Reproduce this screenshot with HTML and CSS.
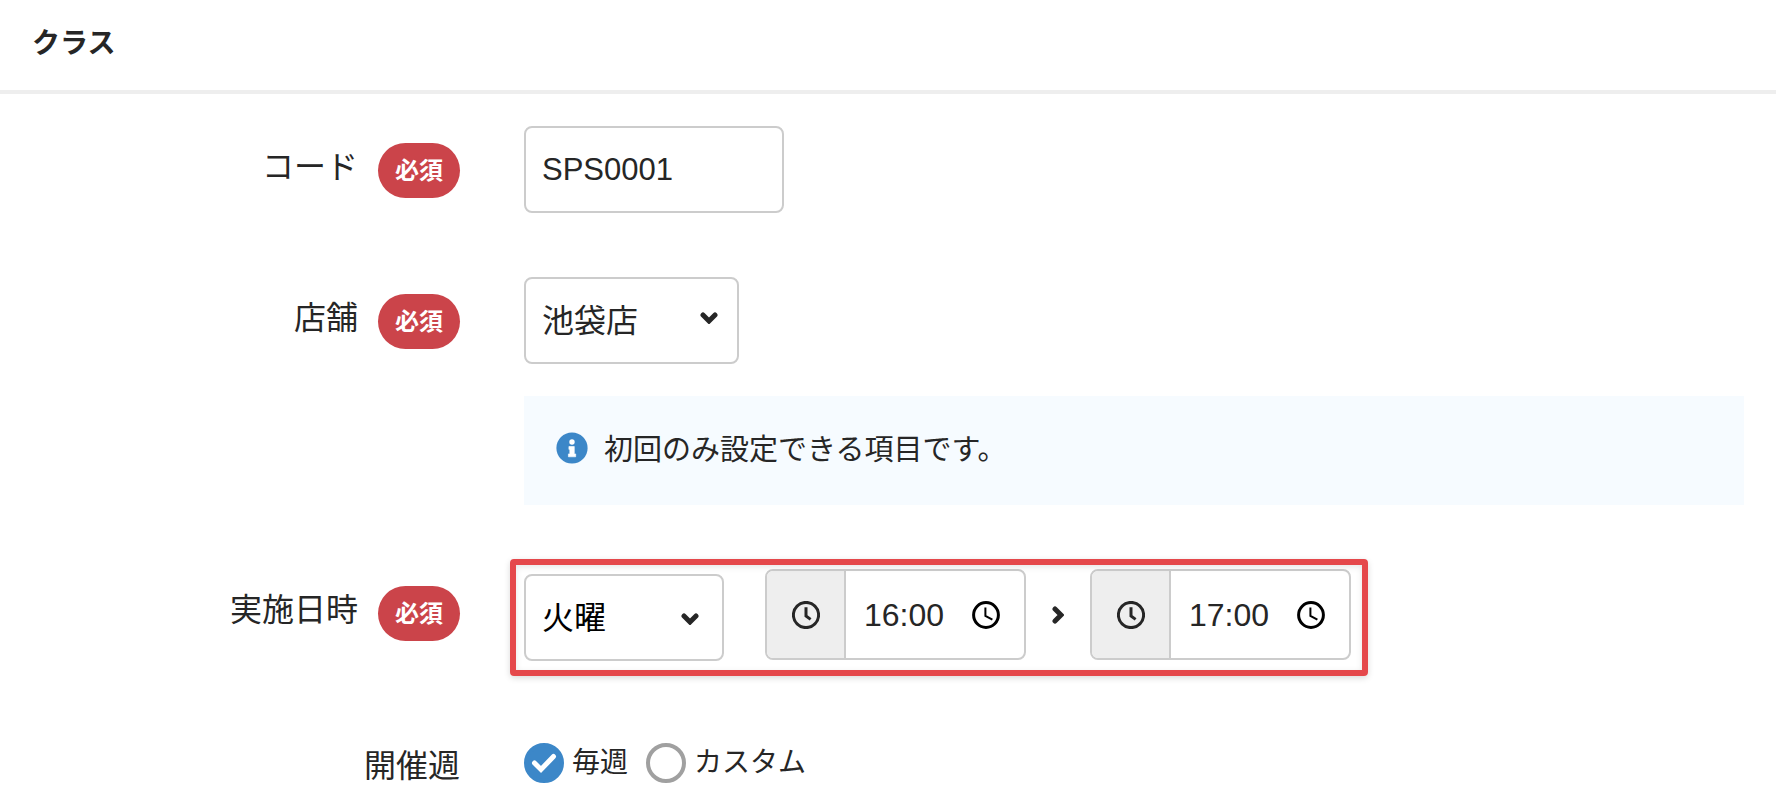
FILE: index.html
```html
<!DOCTYPE html>
<html lang="ja">
<head>
<meta charset="utf-8">
<meta name="viewport" content="width=device-width, initial-scale=1">
<title>クラス</title>
<link rel="stylesheet" href="styles.css">
</head>
<body>
<header class="page-header">
  <h1 class="page-title">クラス</h1>
</header>
<form class="form">
  <div class="row">
    <div class="row-label">
      <label class="label-text" for="code">コード</label>
      <span class="badge">必須</span>
    </div>
    <div class="row-content">
      <input class="control code" id="code" type="text" value="SPS0001">
    </div>
  </div>

  <div class="row">
    <div class="row-label">
      <label class="label-text" for="shop">店舗</label>
      <span class="badge">必須</span>
    </div>
    <div class="row-content">
      <div class="select shop">
        <select class="control" id="shop"><option>池袋店</option></select>
        <svg class="caret" viewBox="0 0 18 12" aria-hidden="true"><path d="M3 3l6 6 6-6"/></svg>
      </div>
      <div class="notice">
        <svg class="notice-icon" viewBox="0 0 32 32" aria-hidden="true"><circle cx="16" cy="16" r="15.6" fill="#3c87c8"/><circle cx="16" cy="10" r="2.7" fill="#fff"/><path fill="#fff" d="M12.9 14.5h5.4v7.4h1.4v2.9h-7.3v-2.9h1.4v-4.5h-.9z" stroke="#fff" stroke-width=".6" stroke-linejoin="round"/></svg>
        <p class="notice-text">初回のみ設定できる項目です。</p>
      </div>
    </div>
  </div>

  <div class="row">
    <div class="row-label">
      <label class="label-text" for="day">実施日時</label>
      <span class="badge">必須</span>
    </div>
    <div class="row-content">
      <div class="schedule">
        <div class="select day">
          <select class="control" id="day"><option>火曜</option></select>
          <svg class="caret" viewBox="0 0 18 12" aria-hidden="true"><path d="M3 3l6 6 6-6"/></svg>
        </div>
        <div class="times">
          <div class="time">
            <span class="addon"><svg class="clock" viewBox="0 0 28 28" aria-hidden="true"><circle cx="14" cy="14" r="12.6"/><path d="M14 6.2V15l4.6 3.4"/></svg></span>
            <input class="time-input" type="text" value="16:00" aria-label="開始時刻">
            <button class="picker" type="button" aria-label="開始時刻を選択"><svg class="clock clock-picker" viewBox="0 0 28 28" aria-hidden="true"><circle cx="14" cy="14" r="12.4"/><path class="hands" d="M13.4 6.5v8.3l7 3.8"/></svg></button>
          </div>
          <svg class="arrow" viewBox="0 0 12 18" aria-hidden="true"><path d="M3 3l6 6-6 6"/></svg>
          <div class="time">
            <span class="addon"><svg class="clock" viewBox="0 0 28 28" aria-hidden="true"><circle cx="14" cy="14" r="12.6"/><path d="M14 6.2V15l4.6 3.4"/></svg></span>
            <input class="time-input" type="text" value="17:00" aria-label="終了時刻">
            <button class="picker" type="button" aria-label="終了時刻を選択"><svg class="clock clock-picker" viewBox="0 0 28 28" aria-hidden="true"><circle cx="14" cy="14" r="12.4"/><path class="hands" d="M13.4 6.5v8.3l7 3.8"/></svg></button>
          </div>
        </div>
        <div class="highlight"></div>
      </div>
    </div>
  </div>

  <div class="row" role="radiogroup" aria-labelledby="weeks">
    <div class="row-label">
      <span class="label-text" id="weeks">開催週</span>
    </div>
    <div class="row-content radios">
      <label class="radio">
        <span class="radio-mark"><input type="radio" name="week" checked><svg class="check" viewBox="0 0 40 40" aria-hidden="true"><path d="M10.5 20l6.5 6.5L29.5 13.5"/></svg></span>毎週
      </label>
      <label class="radio">
        <span class="radio-mark"><input type="radio" name="week"></span>カスタム
      </label>
    </div>
  </div>
</form>
</body>
</html>
```
FILE: styles.css
```css
* {
  box-sizing: border-box;
}

body {
  margin: 0;
  background: #fff;
  color: #262626;
  font: 32px/48px "Liberation Sans", "Noto Sans CJK JP", sans-serif;
}

.page-header {
  padding: 24px 32px 26px;
  border-bottom: 4px solid #eee;
}

.page-title {
  margin: 0;
  font-size: 28px;
  line-height: 40px;
  font-weight: 700;
}

.form {
  display: flex;
  flex-direction: column;
  gap: 64px;
  padding: 32px 32px 0;
}

.row {
  display: grid;
  grid-template-columns: 25% minmax(0, 1fr);
  column-gap: 64px;
}

.row-label {
  display: flex;
  justify-content: flex-end;
  align-items: flex-start;
  gap: 20px;
  padding-top: 17px;
}

.badge {
  padding: 8px 17px;
  border-radius: 28px;
  background: #cb444a;
  color: #fff;
  font-size: 24px;
  line-height: 39px;
  font-weight: 700;
}

.row-content {
  display: flex;
  flex-direction: column;
  align-items: flex-start;
  gap: 32px;
}

.control {
  width: 100%;
  height: 87px;
  margin: 0;
  padding: 0 16px;
  border: 2px solid #ccc;
  border-radius: 8px;
  background: #fff;
  color: inherit;
  font: inherit;
  appearance: none;
}

.code {
  width: 260px;
  font-size: 31px;
}

.select {
  position: relative;
}

.shop {
  width: 215px;
}

.day {
  width: 200px;
  color: #000;
}

.caret {
  position: absolute;
  right: 21px;
  top: 35px;
  width: 18px;
  height: 12px;
  pointer-events: none;
}

.day .caret {
  right: 25px;
  top: 39px;
}

.caret,
.arrow {
  fill: none;
  stroke: #262626;
  stroke-width: 5;
  stroke-linecap: round;
}

.notice {
  display: flex;
  align-items: flex-start;
  gap: 16px;
  width: 100%;
  padding: 32px;
  background: #f6fbff;
}

.notice-icon {
  width: 32px;
  height: 32px;
  margin-top: 4px;
}

.notice-text {
  margin: 0;
  font-size: 29px;
  line-height: 45px;
}

.schedule {
  position: relative;
  display: flex;
  align-items: flex-start;
  gap: 41px;
}

.schedule .day {
  margin-top: 5px;
}

.times {
  display: flex;
  align-items: center;
  gap: 26px;
}

.time {
  display: flex;
  width: 261px;
  height: 91px;
  border: 2px solid #ccc;
  border-radius: 8px;
  overflow: hidden;
}

.addon {
  display: flex;
  flex: none;
  align-items: center;
  justify-content: center;
  width: 79px;
  border-right: 2px solid #ccc;
  background: #eee;
}

.time-input {
  flex: 1;
  min-width: 0;
  padding: 0 0 0 18px;
  border: 0;
  background: none;
  color: inherit;
  font: inherit;
}

.picker {
  flex: none;
  display: flex;
  align-items: center;
  padding: 0 24px 0 0;
  border: 0;
  background: none;
}

.clock {
  width: 28px;
  height: 28px;
  fill: none;
  stroke: #262626;
  stroke-width: 3;
}

.clock-picker {
  stroke: #000;
}

.hands {
  stroke-width: 2;
}

.arrow {
  width: 12px;
  height: 18px;
}

.highlight {
  position: absolute;
  inset: -10px -17px -15px -14px;
  border: 6px solid #e5484b;
  border-radius: 4px;
  box-shadow: 0 2px 6px rgba(0, 0, 0, 0.15), inset 0 2px 6px rgba(0, 0, 0, 0.1);
  pointer-events: none;
}

.radios {
  flex-direction: row;
  gap: 18px;
  padding-top: 18px;
}

.radio {
  display: flex;
  align-items: center;
  gap: 8px;
  font-size: 28px;
  line-height: 40px;
}

.radio-mark {
  position: relative;
  display: flex;
}

.radio input {
  width: 40px;
  height: 40px;
  margin: 0;
  border: 4px solid #a0a0a0;
  border-radius: 50%;
  appearance: none;
}

.radio input:checked {
  border-color: #3c87c8;
  background: #3c87c8;
}

.check {
  position: absolute;
  inset: 0;
  fill: none;
  stroke: #fff;
  stroke-width: 5;
  stroke-linecap: round;
}
```
